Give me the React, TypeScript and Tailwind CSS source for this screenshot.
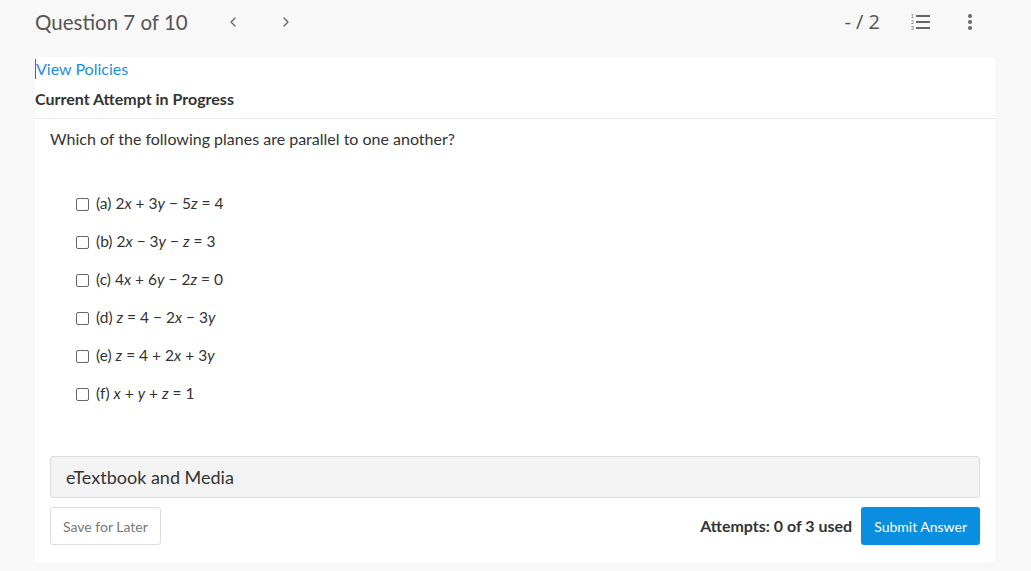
import { ChevronLeft, ChevronRight } from "lucide-react";

type Option = {
  label: string;
  eq: React.ReactNode;
};

const OPTIONS: Option[] = [
  { label: "(a)", eq: <>2<i>x</i> + 3<i>y</i> − 5<i>z</i> = 4</> },
  { label: "(b)", eq: <>2<i>x</i> − 3<i>y</i> − <i>z</i> = 3</> },
  { label: "(c)", eq: <>4<i>x</i> + 6<i>y</i> − 2<i>z</i> = 0</> },
  { label: "(d)", eq: <><i>z</i> = 4 − 2<i>x</i> − 3<i>y</i></> },
  { label: "(e)", eq: <><i>z</i> = 4 + 2<i>x</i> + 3<i>y</i></> },
  { label: "(f)", eq: <><i>x</i> + <i>y</i> + <i>z</i> = 1</> },
];

function ListIcon() {
  return (
    <svg width="20" height="18" viewBox="0 0 20 18" className="text-[#666]">
      <text x="0" y="5" fontSize="5" fill="currentColor" fontFamily="Lato, sans-serif">1</text>
      <text x="0" y="11" fontSize="5" fill="currentColor" fontFamily="Lato, sans-serif">2</text>
      <text x="0" y="17" fontSize="5" fill="currentColor" fontFamily="Lato, sans-serif">3</text>
      <rect x="5" y="2" width="14" height="2" fill="currentColor" />
      <rect x="5" y="8" width="14" height="2" fill="currentColor" />
      <rect x="5" y="14" width="14" height="2" fill="currentColor" />
    </svg>
  );
}

function KebabIcon() {
  return (
    <svg width="6" height="18" viewBox="0 0 6 18" className="text-[#666]">
      <circle cx="3" cy="3" r="2" fill="currentColor" />
      <circle cx="3" cy="9" r="2" fill="currentColor" />
      <circle cx="3" cy="15" r="2" fill="currentColor" />
    </svg>
  );
}

export default function App() {
  return (
    <div className="min-h-[571px] w-[1031px] bg-[#f8f8f8] font-['Lato','Noto_Sans',sans-serif] text-[#333]">
      <header className="h-[57px] pl-[35px] pr-[58px]">
        <div className="flex h-[44px] items-center">
          <h1 className="text-[20.5px] leading-none text-[#555]">Question 7 of 10</h1>
          <ChevronLeft size={16} strokeWidth={2} className="ml-[37px] text-[#666]" />
          <ChevronRight size={16} strokeWidth={2} className="ml-[37px] text-[#666]" />
          <div className="ml-auto flex items-center">
            <span className="text-[20px] leading-none text-[#555] font-['Open_Sans',sans-serif]">- / 2</span>
            <span className="ml-[31px] flex">
              <ListIcon />
            </span>
            <span className="ml-[36px] flex">
              <KebabIcon />
            </span>
          </div>
        </div>
      </header>

      <main className="ml-[35px] w-[960px] bg-white pb-[17px] pt-[2px]">
        <div className="border-b border-[#e8e8e8] pb-[9px]">
          <a className="block h-[20px] w-fit border-l border-[#1a73c8] text-[16px] leading-[20px] text-[#1a8fe0]">
            View Policies
          </a>
          <h2 className="mt-[10px] text-[16px] font-bold leading-[20px] text-[#333]">Current Attempt in Progress</h2>
        </div>

        <div className="px-[15px]">
          <p className="mt-[10px] text-[16px] leading-[20px]">Which of the following planes are parallel to one another?</p>

          <ul className="mt-[36px] pl-[26px]">
            {OPTIONS.map((o) => (
              <li key={o.label} className="flex h-[38px] items-center text-[15.5px]">
                <span className="h-[13px] w-[13px] rounded-[2px] border border-[#666] bg-white" />
                <span className="ml-[7px]">
                  {o.label} {o.eq}
                </span>
              </li>
            ))}
          </ul>

          <div className="mt-[43px] flex h-[42px] items-center rounded-[3px] border border-[#ddd] bg-[#f3f3f3] px-[15px] text-[18px]">
            eTextbook and Media
          </div>

          <div className="mt-[9px] flex items-center">
            <button className="h-[38px] rounded-[3px] border border-[#ddd] bg-white px-[12px] text-[14px] text-[#777]">
              Save for Later
            </button>
            <span className="ml-auto text-[16px] font-bold">Attempts: 0 of 3 used</span>
            <button className="ml-[9px] h-[38px] rounded-[3px] bg-[#0a8ee0] px-[13px] text-[14px] text-white">
              Submit Answer
            </button>
          </div>
        </div>
      </main>
    </div>
  );
}
